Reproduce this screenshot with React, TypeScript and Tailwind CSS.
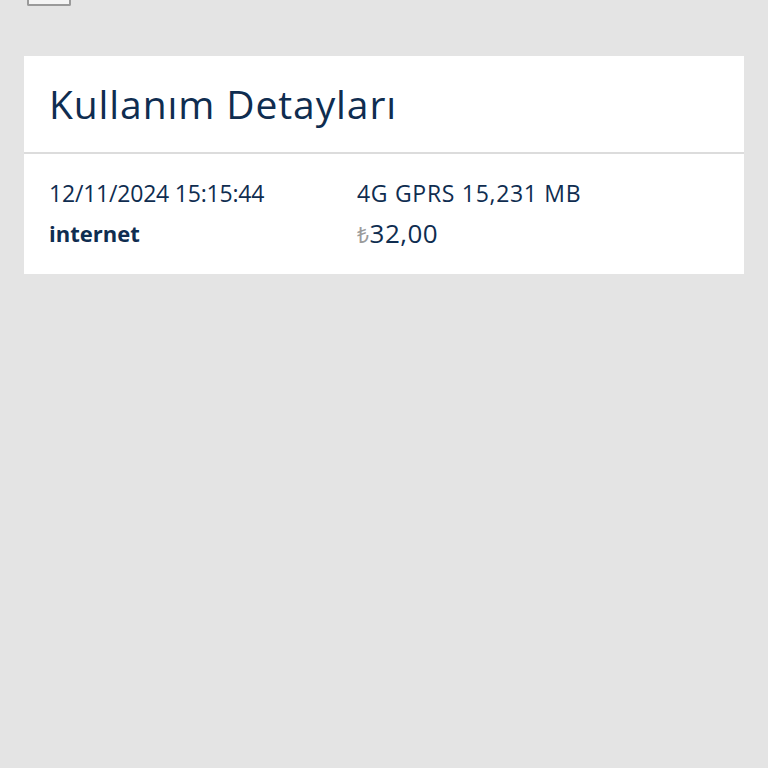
export default function App() {
  return (
    <div
      className="min-h-[768px] w-full bg-[#e4e4e4]"
      style={{ fontFamily: '"Open Sans", "Noto Sans", sans-serif' }}
    >
      <div className="px-[27px]">
        <div className="h-[6px] w-[44px] rounded-b-[2px] border-x-2 border-b-2 border-[#9a9a9a] bg-[#f4f4f4]" />
      </div>

      <div className="mx-[24px] mt-[50px] bg-white">
        <div className="flex h-[98px] items-center border-b-2 border-[#dcdcdc] px-[25px]">
          <h1 className="text-[39px] font-normal tracking-[0.9px] text-[#0f2d50]">
            Kullanım Detayları
          </h1>
        </div>

        <div className="flex px-[25px] pt-[22px] pb-[24px] text-[#0f2d50]">
          <div className="flex w-[308px] flex-col gap-[8px]">
            <span className="text-[23px] leading-[34px] tracking-[-0.2px]">12/11/2024 15:15:44</span>
            <span className="text-[22px] leading-[30px] font-bold">internet</span>
          </div>
          <div className="flex flex-col gap-[8px]">
            <span className="text-[23px] leading-[34px] tracking-[0.7px]">4G GPRS 15,231 MB</span>
            <span className="text-[26px] leading-[30px] tracking-[0.5px]">
              <span className="text-[21px] text-[#9b9b9b]">₺</span>32,00
            </span>
          </div>
        </div>
      </div>
    </div>
  );
}
